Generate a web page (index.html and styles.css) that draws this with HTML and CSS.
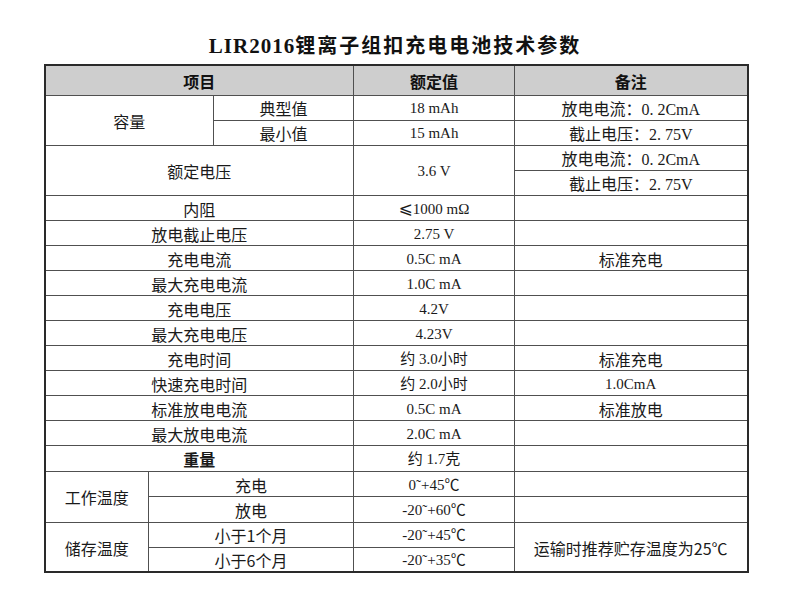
FILE: index.html
```html
<!DOCTYPE html>
<html lang="zh">
<head>
<meta charset="utf-8">
<title>LIR2016锂离子组扣充电电池技术参数</title>
<link rel="stylesheet" href="styles.css">
</head>
<body>
<div class="page">
  <h1 class="title"><span class="lat">LIR2016</span>锂离子组扣充电电池技术参数</h1>
  <table class="spec">
    <colgroup>
      <col class="c1"><col class="c2"><col class="c3"><col class="c4"><col class="c5">
    </colgroup>
    <tr class="head">
      <th colspan="3">项目</th>
      <th>额定值</th>
      <th>备注</th>
    </tr>
    <tr>
      <td colspan="2" rowspan="2" class="lbl">容量</td>
      <td class="lbl">典型值</td>
      <td class="val">18 mAh</td>
      <td class="rem">放电电流：<span class="lat">0. 2CmA</span></td>
    </tr>
    <tr>
      <td class="lbl">最小值</td>
      <td class="val">15 mAh</td>
      <td class="rem">截止电压：<span class="lat">2. 75V</span></td>
    </tr>
    <tr class="r-tall">
      <td colspan="3" rowspan="2" class="lbl">额定电压</td>
      <td rowspan="2" class="val">3.6 V</td>
      <td class="rem">放电电流：<span class="lat">0. 2CmA</span></td>
    </tr>
    <tr>
      <td class="rem">截止电压：<span class="lat">2. 75V</span></td>
    </tr>
    <tr>
      <td colspan="3" class="lbl">内阻</td>
      <td class="val"><span class="le">⩽</span>1000 mΩ</td>
      <td class="rem"></td>
    </tr>
    <tr>
      <td colspan="3" class="lbl">放电截止电压</td>
      <td class="val">2.75 V</td>
      <td class="rem"></td>
    </tr>
    <tr>
      <td colspan="3" class="lbl">充电电流</td>
      <td class="val">0.5C mA</td>
      <td class="rem">标准充电</td>
    </tr>
    <tr>
      <td colspan="3" class="lbl">最大充电电流</td>
      <td class="val">1.0C mA</td>
      <td class="rem"></td>
    </tr>
    <tr>
      <td colspan="3" class="lbl">充电电压</td>
      <td class="val">4.2V</td>
      <td class="rem"></td>
    </tr>
    <tr>
      <td colspan="3" class="lbl">最大充电电压</td>
      <td class="val">4.23V</td>
      <td class="rem"></td>
    </tr>
    <tr>
      <td colspan="3" class="lbl">充电时间</td>
      <td class="val">约 3.0小时</td>
      <td class="rem">标准充电</td>
    </tr>
    <tr>
      <td colspan="3" class="lbl">快速充电时间</td>
      <td class="val">约 2.0小时</td>
      <td class="rem small">1.0CmA</td>
    </tr>
    <tr>
      <td colspan="3" class="lbl">标准放电电流</td>
      <td class="val">0.5C mA</td>
      <td class="rem">标准放电</td>
    </tr>
    <tr>
      <td colspan="3" class="lbl">最大放电电流</td>
      <td class="val">2.0C mA</td>
      <td class="rem"></td>
    </tr>
    <tr class="r-tall">
      <td colspan="3" class="lbl bold">重量</td>
      <td class="val">约 1.7克</td>
      <td class="rem"></td>
    </tr>
    <tr>
      <td rowspan="2" class="lbl">工作温度</td>
      <td colspan="2" class="lbl">充电</td>
      <td class="val temp">0˜+45℃</td>
      <td class="rem"></td>
    </tr>
    <tr class="r-tall">
      <td colspan="2" class="lbl">放电</td>
      <td class="val temp">-20˜+60℃</td>
      <td class="rem"></td>
    </tr>
    <tr>
      <td rowspan="2" class="lbl">储存温度</td>
      <td colspan="2" class="lbl">小于1个月</td>
      <td class="val temp">-20˜+45℃</td>
      <td rowspan="2" class="rem">运输时推荐贮存温度为25℃</td>
    </tr>
    <tr>
      <td colspan="2" class="lbl">小于6个月</td>
      <td class="val temp">-20˜+35℃</td>
    </tr>
  </table>
</div>
</body>
</html>
```

FILE: styles.css
```css
html, body {
  margin: 0;
  padding: 0;
  background: #ffffff;
}

body {
  font-family: "Noto Sans CJK SC", sans-serif;
  color: #1a1a1a;
}

.page {
  width: 703px;
  margin: 0 auto;
  padding-top: 32px;
}

.title {
  margin: 0 0 7px 0;
  height: 25px;
  line-height: 25px;
  text-align: center;
  font-family: "Noto Sans CJK SC", sans-serif;
  font-size: 20px;
  font-weight: 700;
  letter-spacing: 2px;
  color: #111111;
}

.title .lat {
  font-family: "Liberation Serif", serif;
  font-size: 21px;
  letter-spacing: 1px;
}

.spec {
  width: 703px;
  table-layout: fixed;
  border-collapse: collapse;
  border: 2px solid #2a2a2a;
}

.c1 { width: 104px; }
.c2 { width: 65px; }
.c3 { width: 140px; }
.c4 { width: 161px; }
.c5 { width: 233px; }

.spec th,
.spec td {
  border: 1.5px solid #505050;
  padding: 2px 0 0 0;
  text-align: center;
  vertical-align: middle;
  white-space: nowrap;
  line-height: 21px;
}

.spec tr {
  height: 25px;
}

.spec tr.head {
  height: 30px;
}

.spec tr.r-tall {
  height: 25.8px;
}

.spec th {
  background: #cecece;
  font-size: 16px;
  font-weight: 700;
  color: #111111;
}

.lbl {
  font-size: 16px;
}

.bold {
  font-weight: 700;
}

.val {
  font-family: "Liberation Serif", "Noto Sans CJK SC", serif;
  font-size: 15px;
}

.temp {
  font-size: 15px;
}

.le {
  font-family: "DejaVu Sans", "Noto Sans CJK SC", sans-serif;
  font-size: 17px;
}

.rem {
  font-size: 16px;
}

.rem .lat {
  font-family: "Liberation Serif", serif;
}

.rem.small {
  font-family: "Liberation Serif", serif;
  font-size: 15px;
}
```
